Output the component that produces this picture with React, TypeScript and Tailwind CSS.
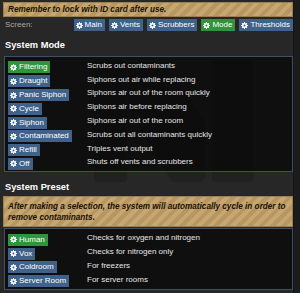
const FONT = "font-['Liberation_Sans',Arial,sans-serif]";

const MODES = [
  { name: "Filtering", desc: "Scrubs out contaminants", on: true },
  { name: "Draught", desc: "Siphons out air while replacing" },
  { name: "Panic Siphon", desc: "Siphons air out of the room quickly" },
  { name: "Cycle", desc: "Siphons air before replacing" },
  { name: "Siphon", desc: "Siphons air out of the room" },
  { name: "Contaminated", desc: "Scrubs out all contaminants quickly" },
  { name: "Refill", desc: "Triples vent output" },
  { name: "Off", desc: "Shuts off vents and scrubbers" },
];

const PRESETS = [
  { name: "Human", desc: "Checks for oxygen and nitrogen", on: true },
  { name: "Vox", desc: "Checks for nitrogen only" },
  { name: "Coldroom", desc: "For freezers" },
  { name: "Server Room", desc: "For server rooms" },
];

const SCREENS = ["Main", "Vents", "Scrubbers", "Mode", "Thresholds"];

function Gear({ on }: { on?: boolean }) {
  return (
    <svg width="7" height="7" viewBox="0 0 14 14" className="shrink-0">
      <g fill="#fff">
        <circle cx="7" cy="7" r="5" />
        <rect x="6" y="0" width="2" height="14" />
        <rect x="0" y="6" width="14" height="2" />
        <rect x="6" y="0" width="2" height="14" transform="rotate(45 7 7)" />
        <rect x="6" y="0" width="2" height="14" transform="rotate(-45 7 7)" />
      </g>
      <circle cx="7" cy="7" r="2" fill={on ? "#2f943c" : "#40628a"} />
    </svg>
  );
}

function Btn({ label, on }: { label: string; on?: boolean }) {
  return (
    <span
      className={`inline-flex items-center gap-[2px] h-[12px] pl-[2px] pr-[3px] text-[8px] leading-none text-white ${
        on ? "bg-[#2f943c]" : "bg-[#40628a]"
      }`}
    >
      <Gear on={on} />
      {label}
    </span>
  );
}

function Notice({ children }: { children: React.ReactNode }) {
  return (
    <div className="relative ml-[3px] border border-[#9c7f52] bg-[repeating-linear-gradient(-45deg,#c6a673_0_4px,#b8975f_4px_8px)] px-[4px] text-[8.2px] font-bold italic text-[#1a1208]">
      {children}
    </div>
  );
}

function OptionBox({ rows }: { rows: { name: string; desc: string; on?: boolean }[] }) {
  return (
    <div className="relative ml-[4px] border border-[#3e4f66] bg-black/60 pl-[3px] py-[2px]">
      {rows.map((r) => (
        <div key={r.name} className="flex items-center h-[13.8px]">
          <div className="w-[79px] shrink-0">
            <Btn label={r.name} on={r.on} />
          </div>
          <span className="text-[8px] text-[#e6e6e6]">{r.desc}</span>
        </div>
      ))}
    </div>
  );
}

// faint corporate logo watermark behind the panel
function Watermark() {
  return (
    <svg className="absolute left-0 top-0 pointer-events-none" width="293" height="293" viewBox="0 0 293 293">
      <g fill="#212121">
        <rect x="94" y="60" width="33" height="122" rx="4" />
        <polygon points="128,62 160,62 205,120 205,178 201,182 172,182 128,110" />
        <rect x="212" y="60" width="41" height="122" rx="4" />
      </g>
    </svg>
  );
}

export default function App() {
  return (
    <div className={`flex w-[300px] h-[293px] bg-[#272727] overflow-hidden ${FONT}`}>
      <div className="relative w-[293px] shrink-0 pt-[2px]">
        <Watermark />
        <Notice>
          <div className="h-[13px] leading-[13px]">Remember to lock with ID card after use.</div>
        </Notice>

        <div className="relative flex items-center h-[14px] mt-[1px] pl-[5px]">
          <span className="w-[87px] text-[8px] text-[#b4a98e]">Screen:</span>
          <div className="flex gap-[4px]">
            {SCREENS.map((s) => (
              <Btn key={s} label={s} on={s === "Mode"} />
            ))}
          </div>
        </div>

        <h2 className="relative pl-[5px] mt-[5px] h-[19px] text-[9.3px] font-bold text-white leading-[16px]">System Mode</h2>
        <OptionBox rows={MODES} />

        <h2 className="relative pl-[5px] mt-[7px] h-[17px] text-[9.3px] font-bold text-white leading-[16px]">System Preset</h2>
        <Notice>
          <div className="pt-[4px] pb-[3px] leading-[11px]">
            After making a selection, the system will automatically cycle in order to remove contaminants.
          </div>
        </Notice>
        <div className="mt-[1px]">
          <OptionBox rows={PRESETS} />
        </div>
      </div>
      <div className="w-[7px] bg-[#1c1c1c] border-l border-[#151515]" />
    </div>
  );
}
